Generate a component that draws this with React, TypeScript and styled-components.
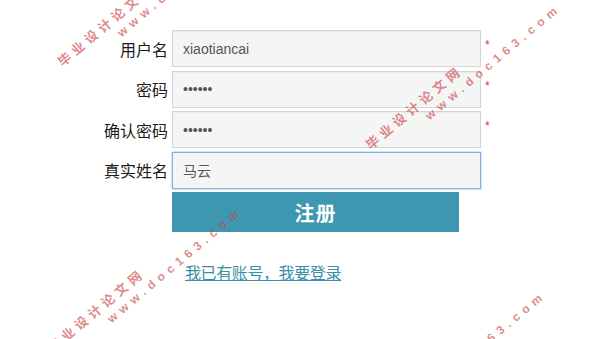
import React from 'react';
import styled, { createGlobalStyle } from 'styled-components';

const GlobalStyle = createGlobalStyle`
  html, body {
    margin: 0;
    padding: 0;
    background: #fff;
  }
  body {
    font-family: "Liberation Sans", "Noto Sans CJK SC", Arial, sans-serif;
    color: #333;
  }
`;

const COLORS = {
  teal: '#3e97b0',
  link: '#3a8ea7',
  inputBg: '#f5f5f5',
  border: '#d4d4d4',
  focus: '#86aee4',
  required: '#d9363e',
};

const Page = styled.div`
  position: relative;
  width: 616px;
  height: 339px;
  overflow: hidden;
  padding-top: 30px;
  box-sizing: border-box;
`;

const Form = styled.form`
  display: grid;
  grid-template-columns: 168px 309px auto;
  column-gap: 4px;
  row-gap: 3.5px;
  align-items: center;
`;

const Label = styled.label`
  text-align: right;
  font-size: 16px;
  color: #1a1a1a;
  font-family: "Noto Sans CJK SC", sans-serif;
  line-height: 20px;
`;

const Input = styled.input<{ $focused?: boolean }>`
  box-sizing: border-box;
  width: 309px;
  height: 37px;
  margin: 0;
  padding: 0 10px;
  font-size: 14px;
  font-family: "Liberation Sans", "Noto Sans CJK SC", sans-serif;
  color: #555;
  background: ${COLORS.inputBg};
  border: 1px solid ${(p) => (p.$focused ? COLORS.focus : COLORS.border)};
  box-shadow: ${(p) =>
    p.$focused ? `0 0 2px ${COLORS.focus}` : 'inset 0 1px 1px rgba(0,0,0,0.04)'};
  outline: none;
`;

const Required = styled.span`
  align-self: start;
  margin-top: 9px;
  color: ${COLORS.required};
  font-size: 12px;
  line-height: 12px;
`;

const Submit = styled.button`
  grid-column: 2;
  width: 287px;
  height: 40px;
  border: 0;
  margin: 0;
  background: ${COLORS.teal};
  color: #fff;
  font-size: 20px;
  font-weight: 700;
  font-family: "Noto Sans CJK SC", sans-serif;
  letter-spacing: 1px;
`;

const LinkRow = styled.div`
  grid-column: 2;
  padding: 26px 0 0 13px;
`;

const LoginLink = styled.a`
  font-size: 16px;
  line-height: 20px;
  color: ${COLORS.link};
  text-decoration: underline;
  font-family: "Noto Sans CJK SC", sans-serif;
  letter-spacing: -0.4px;
`;

const Overlay = styled.div`
  position: absolute;
  inset: 0;
  pointer-events: none;
`;

const Watermark = styled.div<{ $x: number; $y: number }>`
  position: absolute;
  left: ${(p) => p.$x}px;
  top: ${(p) => p.$y}px;
  transform: rotate(-40deg);
  transform-origin: 0 0;
  color: rgba(205, 72, 72, 0.65);
  font-weight: 700;
  white-space: nowrap;
`;

const MarkTitle = styled.div`
  font-family: "Noto Sans CJK SC", sans-serif;
  font-size: 13px;
  line-height: 14px;
  letter-spacing: 4.4px;
`;

const MarkUrl = styled.div`
  margin: 3px 0 0 64px;
  font-family: "Liberation Sans", sans-serif;
  font-size: 12px;
  line-height: 12px;
  letter-spacing: 5.2px;
`;

const marks = [
  { x: 55, y: 58 },
  { x: 363, y: 141 },
  { x: 45, y: 344 },
  { x: 348, y: 428 },
];

const fields = [
  { label: '用户名', type: 'text', value: 'xiaotiancai', required: true },
  { label: '密码', type: 'password', value: '123456', required: true },
  { label: '确认密码', type: 'password', value: '123456', required: true },
  { label: '真实姓名', type: 'text', value: '马云', required: false, focused: true },
];

export default function App() {
  return (
    <>
      <GlobalStyle />
      <Page>
        <Form onSubmit={(e) => e.preventDefault()}>
          {fields.map((f) => (
            <React.Fragment key={f.label}>
              <Label>{f.label}</Label>
              <Input type={f.type} defaultValue={f.value} $focused={f.focused} readOnly />
              {f.required ? <Required>*</Required> : <span />}
            </React.Fragment>
          ))}
          <Submit type="submit">注册</Submit>
          <LinkRow>
            <LoginLink href="#">我已有账号，我要登录</LoginLink>
          </LinkRow>
        </Form>
        <Overlay>
          {marks.map((m) => (
            <Watermark key={`${m.x}-${m.y}`} $x={m.x} $y={m.y}>
              <MarkTitle>毕业设计论文网</MarkTitle>
              <MarkUrl>www.doc163.com</MarkUrl>
            </Watermark>
          ))}
        </Overlay>
      </Page>
    </>
  );
}
